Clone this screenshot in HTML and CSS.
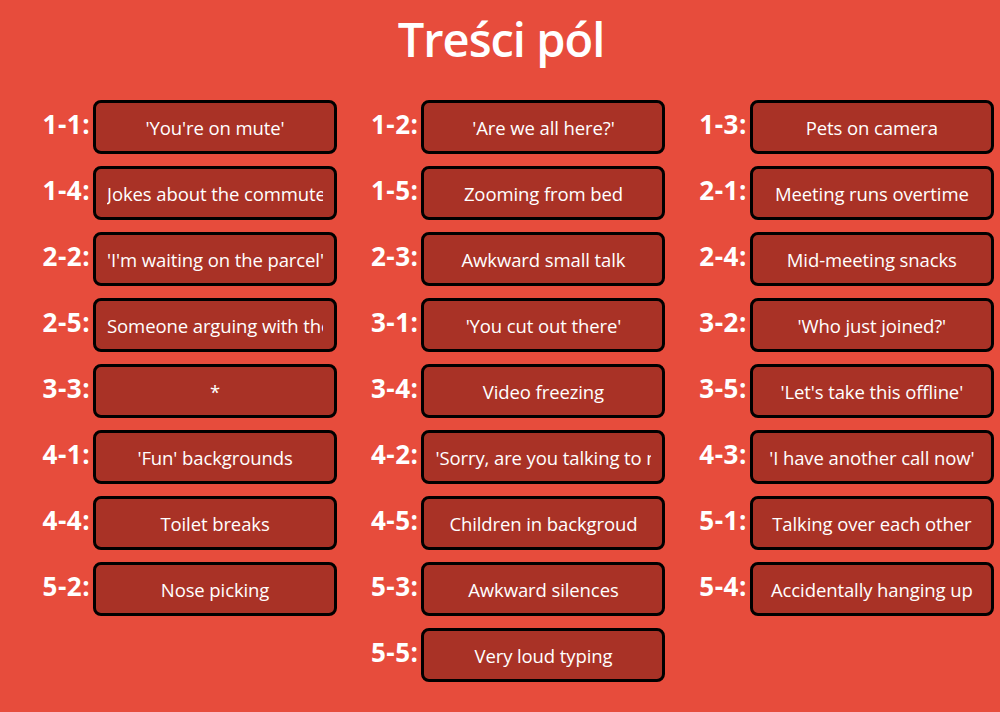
FILE: index.html
```html
<!DOCTYPE html>
<html lang="pl">
<head>
<meta charset="utf-8">
<title>Treści pól</title>
<link rel="stylesheet" href="styles.css">
</head>
<body>
<h1 class="title">Treści pól</h1>
<div class="fields">
  <div class="field"><label class="field-label">1-1:</label><input class="field-input" type="text" value="'You're on mute'"></div>
  <div class="field"><label class="field-label">1-2:</label><input class="field-input" type="text" value="'Are we all here?'"></div>
  <div class="field"><label class="field-label">1-3:</label><input class="field-input" type="text" value="Pets on camera"></div>
  <div class="field"><label class="field-label">1-4:</label><input class="field-input" type="text" value="Jokes about the commute"></div>
  <div class="field"><label class="field-label">1-5:</label><input class="field-input" type="text" value="Zooming from bed"></div>
  <div class="field"><label class="field-label">2-1:</label><input class="field-input" type="text" value="Meeting runs overtime"></div>
  <div class="field"><label class="field-label">2-2:</label><input class="field-input" type="text" value="'I'm waiting on the parcel'"></div>
  <div class="field"><label class="field-label">2-3:</label><input class="field-input" type="text" value="Awkward small talk"></div>
  <div class="field"><label class="field-label">2-4:</label><input class="field-input" type="text" value="Mid-meeting snacks"></div>
  <div class="field"><label class="field-label">2-5:</label><input class="field-input" type="text" value="Someone arguing with their partner"></div>
  <div class="field"><label class="field-label">3-1:</label><input class="field-input" type="text" value="'You cut out there'"></div>
  <div class="field"><label class="field-label">3-2:</label><input class="field-input" type="text" value="'Who just joined?'"></div>
  <div class="field"><label class="field-label">3-3:</label><input class="field-input" type="text" value="*"></div>
  <div class="field"><label class="field-label">3-4:</label><input class="field-input" type="text" value="Video freezing"></div>
  <div class="field"><label class="field-label">3-5:</label><input class="field-input" type="text" value="'Let's take this offline'"></div>
  <div class="field"><label class="field-label">4-1:</label><input class="field-input" type="text" value="'Fun' backgrounds"></div>
  <div class="field"><label class="field-label">4-2:</label><input class="field-input" type="text" value="'Sorry, are you talking to me?'"></div>
  <div class="field"><label class="field-label">4-3:</label><input class="field-input" type="text" value="'I have another call now'"></div>
  <div class="field"><label class="field-label">4-4:</label><input class="field-input" type="text" value="Toilet breaks"></div>
  <div class="field"><label class="field-label">4-5:</label><input class="field-input" type="text" value="Children in backgroud"></div>
  <div class="field"><label class="field-label">5-1:</label><input class="field-input" type="text" value="Talking over each other"></div>
  <div class="field"><label class="field-label">5-2:</label><input class="field-input" type="text" value="Nose picking"></div>
  <div class="field"><label class="field-label">5-3:</label><input class="field-input" type="text" value="Awkward silences"></div>
  <div class="field"><label class="field-label">5-4:</label><input class="field-input" type="text" value="Accidentally hanging up"></div>
  <div class="field"><label class="field-label">5-5:</label><input class="field-input" type="text" value="Very loud typing"></div>
</div>
</body>
</html>
```
FILE: styles.css
```css
html, body {
  margin: 0;
  background: #e74c3c;
}
body {
  padding: 8px 6px 8px 8px;
  font-family: "Open Sans", "Noto Sans", sans-serif;
  color: #fff;
}
.title {
  margin: 3px 0 0;
  text-align: center;
  font-size: 47px;
  font-weight: 600;
  letter-spacing: -1px;
  line-height: 56px;
}
.fields {
  margin-top: 33px;
  padding-left: 0.5px;
  display: flex;
  flex-wrap: wrap;
  justify-content: center;
  row-gap: 12px;
}
.field {
  width: 328.4px;
  display: flex;
  align-items: center;
  gap: 3px;
}
.field-label {
  flex: 1;
  margin-bottom: 7px;
  text-align: right;
  font-size: 26px;
  font-weight: 700;
  line-height: 30px;
  letter-spacing: 0.5px;
  white-space: nowrap;
}
.field-input {
  box-sizing: border-box;
  flex: none;
  width: 244px;
  height: 54px;
  margin: 0;
  padding: 0 11px;
  border: 3px solid #000;
  border-radius: 8px;
  background: #a93226;
  color: #fff;
  font-family: "Open Sans", "Noto Sans", sans-serif;
  font-size: 18.5px;
  letter-spacing: -0.1px;
  text-align: center;
  outline: none;
}
```
